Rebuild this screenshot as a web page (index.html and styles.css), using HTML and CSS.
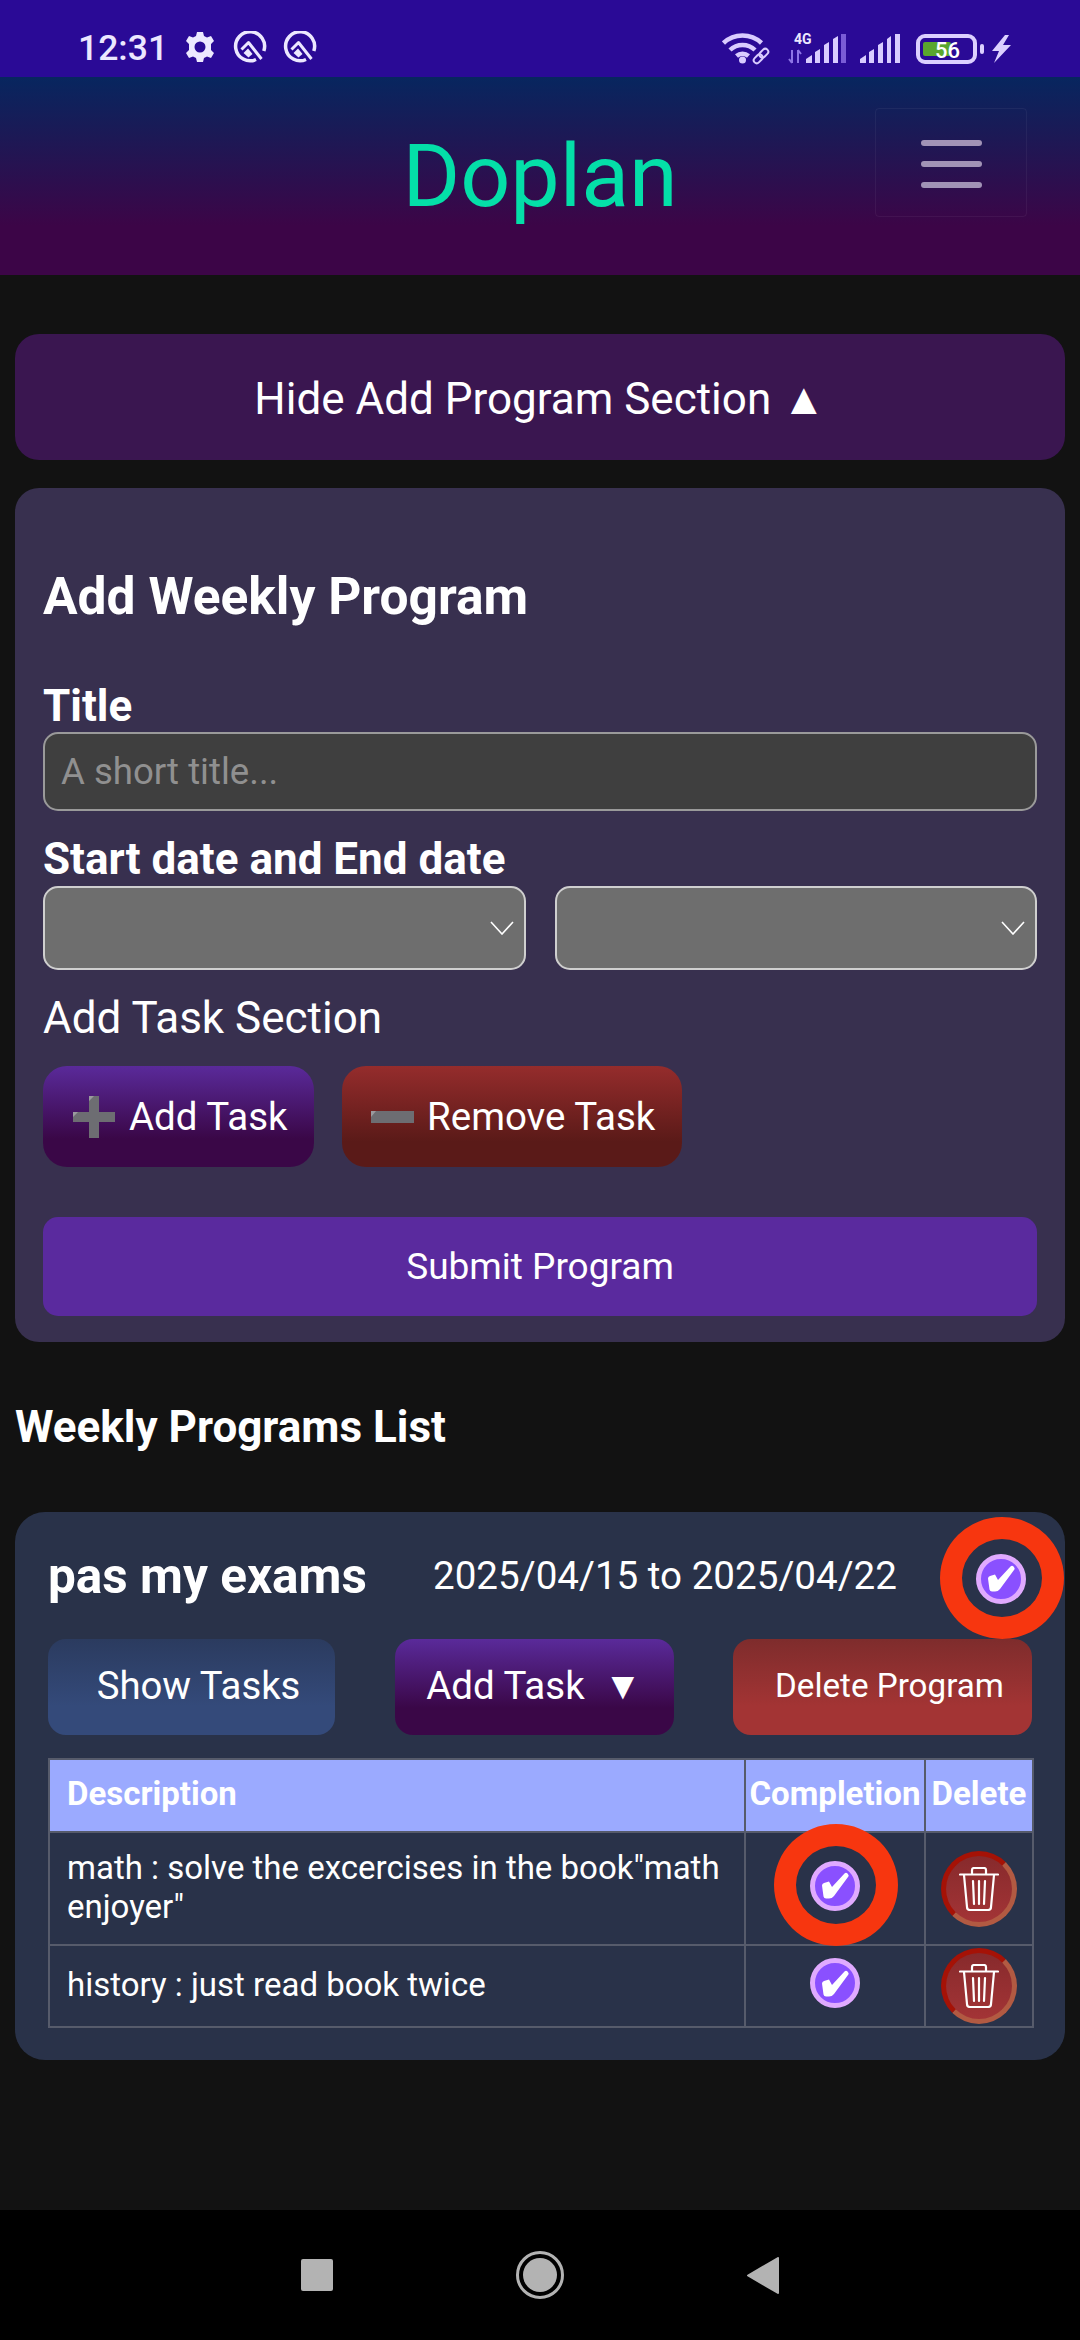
FILE: index.html
```html
<!DOCTYPE html>
<html lang="en">
<head>
<meta charset="utf-8">
<title>Doplan</title>
<link rel="stylesheet" href="styles.css">
</head>
<body>
<div class="status">
  <div class="status-left">
    <span class="time">12:31</span>
    <svg class="gear" viewBox="0 0 30 30" width="30" height="30"><path fill-rule="evenodd" fill="#ece8ff" d="M12 0h6l1 4 3 1.500 4-1.500 3 5-3 3v6l3 3-3 5-4-1.500-3 1.500-1 4h-6l-1-4-3-1.500-4 1.500-3-5 3-3v-6l-3-3 3-5 4 1.500 3-1.500zM15 9.500a5.500 5.500 0 1 0 0 11 5.500 5.500 0 0 0 0-11z"/></svg>
    <svg class="qicon" viewBox="0 0 34 32" width="34" height="32"><path fill="none" stroke="#ece8ff" stroke-width="3.500" d="M23 28.500A14.500 14.500 0 1 1 30.800 20"/><path fill="none" stroke="#ece8ff" stroke-width="3" stroke-linejoin="round" d="M8.500 18.500l7-7 13 16.500"/><path fill="#ece8ff" d="M10.500 22l4.500-4.500 4.500 5.500-4 3.500z"/></svg>
    <svg class="qicon" viewBox="0 0 34 32" width="34" height="32"><path fill="none" stroke="#ece8ff" stroke-width="3.500" d="M23 28.500A14.500 14.500 0 1 1 30.800 20"/><path fill="none" stroke="#ece8ff" stroke-width="3" stroke-linejoin="round" d="M8.500 18.500l7-7 13 16.500"/><path fill="#ece8ff" d="M10.500 22l4.500-4.500 4.500 5.500-4 3.500z"/></svg>
  </div>
  <svg class="status-right" viewBox="722 30 292 36" width="292" height="36">
    <g fill="none" stroke="#d9ccff" stroke-width="4.500">
      <path d="M723.500 43a28 28 0 0 1 38 0"/>
      <path d="M730 50a18 18 0 0 1 25 0"/>
      <path d="M736.500 56a9 9 0 0 1 12 0"/>
    </g>
    <circle cx="742.500" cy="60" r="3.500" fill="#d9ccff"/>
    <g fill="none" stroke="#d9ccff" stroke-width="2" transform="rotate(-45 761 56)">
      <rect x="752" y="53" width="10" height="6" rx="3"/>
      <rect x="760" y="53" width="10" height="6" rx="3"/>
    </g>
    <text class="tiny" x="794" y="44">4G</text>
    <path d="M792 50v13M792 63l-3-4M798 63v-13M798 50l3 4" stroke="#8d74e6" stroke-width="2" fill="none"/>
    <path fill="#d9ccff" d="M806 63v-4l6-4v8zM815 63v-11l5-3v14zM824 63v-18l5-3v21z"/>
    <path fill="#7a5cd6" d="M841 63v-29h5v29z"/>
    <path fill="#d9ccff" d="M833 63v-24l5-3v27z"/>
    <path fill="#d9ccff" d="M860 63v-4l6-4v8zM869 63v-11l5-3v14zM878 63v-18l5-3v21zM887 63v-24l4-3v27zM895 63v-29h5v29z"/>
    <rect x="918" y="36" width="57" height="26" rx="7" fill="none" stroke="#dcd0ff" stroke-width="4"/>
    <rect x="923" y="42" width="28" height="14" rx="2" fill="#5aa62e"/>
    <text class="batt" x="935" y="58">56</text>
    <rect x="980" y="44" width="4" height="10" rx="2" fill="#dcd0ff"/>
    <path fill="#dcd0ff" d="M1005 35l-13 16h7l-5 12 17-18h-8l6-10z"/>
  </svg>
</div>

<header class="topbar">
  <h1 class="brand">Doplan</h1>
  <button class="burger" type="button" aria-label="Menu"><span></span><span></span><span></span></button>
</header>

<main class="content">
  <button class="toggle" type="button">Hide Add Program Section ▲</button>

  <section class="form-card">
    <h2 class="form-title">Add Weekly Program</h2>
    <label class="label label-title">Title</label>
    <input class="text-input" type="text" placeholder="A short title...">
    <label class="label label-dates">Start date and End date</label>
    <div class="dates">
      <div class="select"><svg viewBox="0 0 24 14" width="24" height="14"><path d="M1 1l11 12L23 1" fill="none" stroke="#fff" stroke-width="1.600"/></svg></div>
      <div class="select"><svg viewBox="0 0 24 14" width="24" height="14"><path d="M1 1l11 12L23 1" fill="none" stroke="#fff" stroke-width="1.600"/></svg></div>
    </div>
    <div class="section-name">Add Task Section</div>
    <div class="task-actions">
      <button class="act act-add" type="button">
        <svg viewBox="0 0 42 42" width="42" height="42"><path fill="#6d6d72" d="M16 0h10v16h16v10H26v16H16V26H0V16h16z"/><path fill="#9a9a9e" d="M16 5l5-5h-5zM0 21l5-5H0z"/></svg>
        Add Task
      </button>
      <button class="act act-remove" type="button">
        <svg viewBox="0 0 43 12" width="43" height="12"><path fill="#6d6d72" d="M0 0h43v12H0z"/><path fill="#9a9a9e" d="M0 6l5-6H0z"/></svg>
        Remove Task
      </button>
    </div>
    <button class="submit" type="button">Submit Program</button>
  </section>

  <h3 class="list-title">Weekly Programs List</h3>

  <section class="program">
    <div class="program-head">
      <h4 class="program-name">pas my exams</h4>
      <span class="program-dates">2025/04/15 to 2025/04/22</span>
      <span class="check-wrap check-head">
        <span class="check"><svg viewBox="0 0 28 27" width="28" height="27"><path fill="#fff" d="M1 13.500Q1 11.500 3 11L8 9.500 11 15 23.500 1.500Q25 0 26.500 1.500L27.500 3Q28 4 27 5L13 24Q11 26.500 8 26.500H5Q3 26.500 2.500 24.500z"/></svg></span>
        <span class="ring"></span>
      </span>
    </div>
    <div class="program-actions">
      <button class="pbtn pbtn-show" type="button">Show Tasks</button>
      <button class="pbtn pbtn-add" type="button">Add Task&nbsp; ▼</button>
      <button class="pbtn pbtn-del" type="button">Delete Program</button>
    </div>
    <table class="tasks">
      <thead>
        <tr><th class="c-desc">Description</th><th class="c-done">Completion</th><th class="c-del">Delete</th></tr>
      </thead>
      <tbody>
        <tr class="row-one">
          <td class="c-desc">math : solve the excercises in the book"math enjoyer"</td>
          <td class="c-done"><span class="check-wrap"><span class="check"><svg viewBox="0 0 28 27" width="28" height="27"><path fill="#fff" d="M1 13.500Q1 11.500 3 11L8 9.500 11 15 23.500 1.500Q25 0 26.500 1.500L27.500 3Q28 4 27 5L13 24Q11 26.500 8 26.500H5Q3 26.500 2.500 24.500z"/></svg></span><span class="ring"></span></span></td>
          <td class="c-del"><button class="trash" type="button" aria-label="Delete"><svg viewBox="0 0 40 44" width="40" height="44"><g fill="none" stroke="#fff" stroke-width="2.200" stroke-linejoin="round" stroke-linecap="round"><path d="M1 7.500h38"/><path d="M13 7V3q0-2 2-2h10q2 0 2 2v4"/><path d="M5 8l3 32q0 3 3 3h18q3 0 3-3l3-32"/><path d="M14 14l1 23M20 14v23M26 14l-1 23"/></g></svg></button></td>
        </tr>
        <tr class="row-two">
          <td class="c-desc">history : just read book twice</td>
          <td class="c-done"><span class="check-wrap"><span class="check"><svg viewBox="0 0 28 27" width="28" height="27"><path fill="#fff" d="M1 13.500Q1 11.500 3 11L8 9.500 11 15 23.500 1.500Q25 0 26.500 1.500L27.500 3Q28 4 27 5L13 24Q11 26.500 8 26.500H5Q3 26.500 2.500 24.500z"/></svg></span></span></td>
          <td class="c-del"><button class="trash" type="button" aria-label="Delete"><svg viewBox="0 0 40 44" width="40" height="44"><g fill="none" stroke="#fff" stroke-width="2.200" stroke-linejoin="round" stroke-linecap="round"><path d="M1 7.500h38"/><path d="M13 7V3q0-2 2-2h10q2 0 2 2v4"/><path d="M5 8l3 32q0 3 3 3h18q3 0 3-3l3-32"/><path d="M14 14l1 23M20 14v23M26 14l-1 23"/></g></svg></button></td>
        </tr>
      </tbody>
    </table>
  </section>
</main>

<nav class="navbar">
  <span class="nav-square"></span>
  <span class="nav-home"><span></span></span>
  <svg class="nav-back" viewBox="0 0 32 37" width="32" height="37"><path fill="#b3b3b3" stroke="#b3b3b3" stroke-width="2" stroke-linejoin="round" d="M31 1v35L1 18.500z"/></svg>
</nav>
</body>
</html>
```

FILE: styles.css
```css
* { box-sizing: border-box; }
html, body { margin: 0; padding: 0; }
body {
  width: 1080px;
  height: 2340px;
  display: flex;
  flex-direction: column;
  background: #121212;
  color: #fff;
  font-family: Roboto, "Liberation Sans", sans-serif;
  overflow: hidden;
}
button { font-family: inherit; color: #fff; border: 0; }

/* status bar */
.status {
  height: 77px;
  flex: none;
  background: #2a0a96;
  display: flex;
  align-items: flex-start;
  justify-content: space-between;
  padding: 31px 66px 0 78px;
}
.status-left { display: flex; align-items: center; height: 32px; }
.time { font-size: 35.5px; font-weight: 500; color: #ece8ff; width: 107px; line-height: 34px; padding-top: 2px; }
.gear { margin-right: 18px; }
.qicon { margin-right: 16px; }
.status-right { display: block; margin-top: -1px; }
.tiny { font: 700 14px Roboto, sans-serif; fill: #ece8ff; }
.batt { font: 500 22px Roboto, sans-serif; fill: #fff; }

/* header */
.topbar {
  height: 198px;
  flex: none;
  background: linear-gradient(180deg, #07265f 0%, #3c0547 75%, #3c0547 100%);
  display: flex;
  align-items: flex-start;
  justify-content: center;
  position: relative;
}
.brand {
  margin: 49px 0 0;
  font-size: 88px;
  font-weight: 400;
  line-height: 100px;
  color: #04dfa8;
}
.burger {
  position: absolute;
  left: 875px;
  top: 31px;
  width: 152px;
  height: 109px;
  background: transparent;
  border: 1px solid rgba(255, 255, 255, 0.05);
  border-radius: 4px;
  display: flex;
  flex-direction: column;
  align-items: center;
  justify-content: center;
  gap: 15px;
  padding: 3px 0 0;
}
.burger span { width: 61px; height: 6px; border-radius: 3px; background: #a193b6; }

/* main */
.content { flex: 1; padding: 59px 15px 0; display: flex; flex-direction: column; }
.toggle {
  height: 126px;
  flex: none;
  background: #3a1650;
  border-radius: 24px;
  font-size: 44px;
  padding: 4px 0 0;
}

/* add form */
.form-card {
  margin-top: 28px;
  height: 854px;
  flex: none;
  background: #38304f;
  border-radius: 24px;
  padding: 0 28px;
  display: flex;
  flex-direction: column;
}
.form-title { margin: 79px 0 0; font-size: 51.5px; font-weight: 700; line-height: 60px; }
.label { display: block; font-size: 44px; font-weight: 700; line-height: 50px; }
.label-title { margin-top: 54px; height: 50px; }
.text-input {
  margin-top: 1px;
  height: 79px;
  flex: none;
  background: #3f3f3f;
  border: 2px solid #9a9a9a;
  border-radius: 15px;
  padding: 0 16px;
  font-family: inherit;
  font-size: 36.6px;
  color: #fff;
}
.text-input::placeholder { color: #909090; opacity: 1; }
.label-dates { margin-top: 22px; height: 53px; padding-top: 1px; }
.dates { display: flex; gap: 29px; }
.select {
  flex: 1;
  height: 84px;
  background: #6e6e6e;
  border: 2px solid #cfcfcf;
  border-radius: 15px;
  display: flex;
  align-items: center;
  justify-content: flex-end;
  padding-right: 10px;
}
.section-name { margin-top: 23px; font-size: 44px; line-height: 50px; height: 50px; }
.task-actions { margin-top: 23px; display: flex; gap: 28px; }
.act {
  height: 101px;
  border-radius: 24px;
  font-size: 38.5px;
  display: flex;
  align-items: center;
  padding: 0;
}
.act-add { width: 271px; padding-left: 30px; gap: 14px; background: linear-gradient(180deg, #5a2a9a 0%, #3a0747 72%, #3a0747 100%); }
.act-remove { width: 340px; padding-left: 29px; gap: 13px; background: linear-gradient(180deg, #952c2c 0%, #5a1a18 75%, #5a1a18 100%); }
.submit {
  margin-top: 50px;
  height: 99px;
  flex: none;
  background: #5a2a9e;
  border-radius: 15px;
  font-size: 37px;
  padding: 0;
}

.list-title { margin: 58px 0 0; font-size: 44px; font-weight: 700; line-height: 54px; height: 54px; }

/* program card */
.program {
  margin-top: 58px;
  height: 548px;
  flex: none;
  background: #293249;
  border-radius: 30px;
  padding: 0 33px;
  position: relative;
}
.program-head { height: 127px; display: flex; align-items: center; position: relative; }
.program-name { margin: 0; font-size: 49.5px; font-weight: 700; width: 385px; flex: none; }
.program-dates { font-size: 38.6px; width: 541px; flex: none; }
.check-wrap { position: relative; display: inline-flex; width: 50px; height: 50px; vertical-align: middle; }
.check-head { top: 3px; left: 2px; }
.check {
  width: 50px;
  height: 50px;
  border-radius: 50%;
  background: #8a50ff;
  border: 5px solid #e0aaff;
  display: flex;
  align-items: center;
  justify-content: center;
}
.check svg { display: block; }
.ring {
  position: absolute;
  left: -36px;
  top: -37px;
  width: 124px;
  height: 122px;
  border: 22px solid #f7360f;
  border-radius: 50%;
  pointer-events: none;
}
.program-actions { display: flex; justify-content: space-between; height: 96px; }
.pbtn { height: 96px; border-radius: 18px; font-size: 38.3px; padding: 0 0 3px; }
.pbtn-show { width: 287px; background: linear-gradient(180deg, #2b3b5f 0%, #344a7a 70%); padding-left: 14px; text-align: center; }
.pbtn-add { width: 279px; background: linear-gradient(180deg, #5a2a9a 0%, #3a0747 72%, #3a0747 100%); font-size: 38.5px; }
.pbtn-del { width: 299px; background: linear-gradient(180deg, #7e2c2c 0%, #a33434 70%); font-size: 33.2px; padding-left: 14px; }

/* tasks table */
.tasks {
  margin-top: 23px;
  width: 984px;
  border-collapse: collapse;
  table-layout: fixed;
}
.tasks th, .tasks td { border: 2px solid #565b6b; padding: 0; }
.tasks th { background: #9baaff; height: 73px; font-size: 33px; font-weight: 700; text-align: center; padding-bottom: 4px; }
.tasks td { font-size: 33px; line-height: 39px; text-align: center; }
.tasks th.c-desc { text-align: left; padding-left: 17px; }
.tasks td.c-desc { text-align: left; padding-left: 17px; padding-right: 10px; padding-bottom: 3px; }
.c-desc { width: 696px; }
.c-done { width: 180px; }
.c-del { width: 108px; }
.row-one { height: 113px; }
.row-two { height: 82px; }
.row-one .c-done .check-wrap { top: -3px; }
.row-two .c-done .check-wrap { top: -3px; }
.trash {
  width: 76px;
  height: 76px;
  border-radius: 50%;
  border: 5px solid;
  border-color: #a51206 #b25a42 #b25a42 #a51206;
  background: linear-gradient(180deg, #872a2c, #a33436);
  display: inline-flex;
  align-items: center;
  justify-content: center;
  padding: 0;
  vertical-align: middle;
}

/* nav bar */
.navbar {
  height: 130px;
  flex: none;
  background: #000;
  display: flex;
  align-items: center;
  justify-content: center;
  gap: 183px;
}
.nav-square { width: 32px; height: 32px; background: #b3b3b3; border-radius: 2px; }
.nav-home { width: 48px; height: 48px; border: 3px solid #b3b3b3; border-radius: 50%; display: flex; align-items: center; justify-content: center; }
.nav-home span { width: 34px; height: 34px; border-radius: 50%; background: #b3b3b3; }
.nav-back { display: block; }
```
